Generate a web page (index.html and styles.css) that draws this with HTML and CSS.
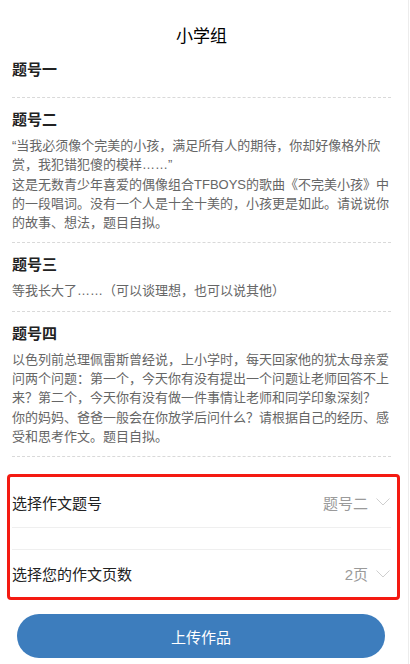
FILE: index.html
```html
<!DOCTYPE html>
<html lang="zh-CN">
<head>
<meta charset="utf-8">
<title>小学组</title>
<link rel="stylesheet" href="styles.css">
</head>
<body>
<div class="page">
  <h1 class="title">小学组</h1>

  <section class="topic topic-empty">
    <h2 class="topic-name">题号一</h2>
  </section>

  <section class="topic">
    <h2 class="topic-name">题号二</h2>
    <p class="topic-text">“当我必须像个完美的小孩，满足所有人的期待，你却好像格外欣赏，我犯错犯傻的模样……”<br>这是无数青少年喜爱的偶像组合TFBOYS的歌曲《不完美小孩》中的一段唱词。没有一个人是十全十美的，小孩更是如此。请说说你的故事、想法，题目自拟。</p>
  </section>

  <section class="topic">
    <h2 class="topic-name">题号三</h2>
    <p class="topic-text">等我长大了……（可以谈理想，也可以说其他）</p>
  </section>

  <section class="topic">
    <h2 class="topic-name">题号四</h2>
    <p class="topic-text">以色列前总理佩雷斯曾经说，上小学时，每天回家他的犹太母亲爱问两个问题：第一个，今天你有没有提出一个问题让老师回答不上来？第二个，今天你有没有做一件事情让老师和同学印象深刻？<br>你的妈妈、爸爸一般会在你放学后问什么？请根据自己的经历、感受和思考作文。题目自拟。</p>
  </section>

  <div class="picker-box">
    <div class="picker-row">
      <span class="picker-label">选择作文题号</span>
      <span class="picker-value">题号二
        <svg class="chevron" width="14" height="8" viewBox="0 0 14 8"><polyline points="0.5,0.5 7,7 13.5,0.5" fill="none" stroke="#cfcfcf" stroke-width="1"/></svg>
      </span>
    </div>
    <div class="picker-gap"></div>
    <div class="picker-row picker-row-last">
      <span class="picker-label">选择您的作文页数</span>
      <span class="picker-value">2页
        <svg class="chevron" width="14" height="8" viewBox="0 0 14 8"><polyline points="0.5,0.5 7,7 13.5,0.5" fill="none" stroke="#cfcfcf" stroke-width="1"/></svg>
      </span>
    </div>
  </div>

  <button class="upload-btn" type="button">上传作品</button>
</div>
</body>
</html>
```

FILE: styles.css
```css
html, body {
  margin: 0;
  padding: 0;
  background: #fff;
}

body {
  font-family: "Liberation Sans", "Noto Sans CJK SC", sans-serif;
  color: #222;
}

.page {
  width: 409px;
  min-height: 664px;
  box-sizing: border-box;
  border-right: 1px solid #ececec;
  padding: 26px 17px 0 12px;
}

.title {
  margin: 0;
  font-size: 17px;
  line-height: 22px;
  font-weight: normal;
  color: #000;
  text-align: center;
}

.topic {
  padding: 11px 0 10px;
  border-bottom: 1px dashed #d9d9d9;
}

.topic-empty {
  padding-bottom: 11px;
}

.topic-name {
  margin: 0 0 5px;
  font-size: 15px;
  line-height: 22px;
  font-weight: bold;
  color: #222;
}

.topic-text {
  margin: 0;
  font-size: 13px;
  line-height: 19.3px;
  color: #666;
}

.picker-box {
  margin: 17px -9px 0 -5px;
  padding: 0 6px 0 2px;
  border: 3px solid #f41a12;
  border-radius: 4px;
}

.picker-row {
  display: flex;
  align-items: center;
  justify-content: space-between;
  height: 50px;
  border-bottom: 1px solid #efefef;
  font-size: 15px;
}

.picker-gap {
  height: 21px;
  border-bottom: 1px solid #efefef;
}

.picker-row-last {
  height: 47px;
  border-bottom: none;
}

.picker-label {
  color: #222;
}

.picker-value {
  display: flex;
  align-items: center;
  gap: 8px;
  color: #9a9a9a;
}

.chevron {
  display: block;
  margin-right: 1px;
}

.upload-btn {
  display: block;
  width: calc(100% - 11px);
  height: 44px;
  margin: 14px 6px 0 5px;
  border: none;
  border-radius: 22px;
  background: #3d7dbd;
  color: #fff;
  font-family: "Liberation Sans", "Noto Sans CJK SC", sans-serif;
  font-size: 15px;
  cursor: pointer;
}
```
